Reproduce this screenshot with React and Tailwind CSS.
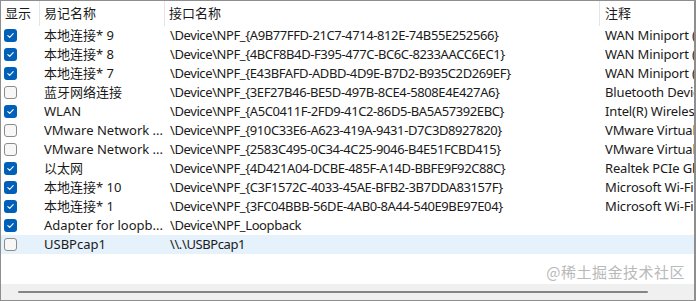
import React from "react";

const rows = [
  [true, "本地连接* 9", "\\Device\\NPF_{A9B77FFD-21C7-4714-812E-74B55E252566}", "WAN Miniport (Network Monitor)"],
  [true, "本地连接* 8", "\\Device\\NPF_{4BCF8B4D-F395-477C-BC6C-8233AACC6EC1}", "WAN Miniport (IPv6)"],
  [true, "本地连接* 7", "\\Device\\NPF_{E43BFAFD-ADBD-4D9E-B7D2-B935C2D269EF}", "WAN Miniport (IP)"],
  [false, "蓝牙网络连接", "\\Device\\NPF_{3EF27B46-BE5D-497B-8CE4-5808E4E427A6}", "Bluetooth Device (Personal Area Network)"],
  [true, "WLAN", "\\Device\\NPF_{A5C0411F-2FD9-41C2-86D5-BA5A57392EBC}", "Intel(R) Wireless-AC 9560"],
  [false, "VMware Network ...", "\\Device\\NPF_{910C33E6-A623-419A-9431-D7C3D8927820}", "VMware Virtual Ethernet Adapter"],
  [false, "VMware Network ...", "\\Device\\NPF_{2583C495-0C34-4C25-9046-B4E51FCBD415}", "VMware Virtual Ethernet Adapter"],
  [true, "以太网", "\\Device\\NPF_{4D421A04-DCBE-485F-A14D-BBFE9F92C88C}", "Realtek PCIe GbE Family Controller"],
  [true, "本地连接* 10", "\\Device\\NPF_{C3F1572C-4033-45AE-BFB2-3B7DDA83157F}", "Microsoft Wi-Fi Direct Virtual Adapter"],
  [true, "本地连接* 1", "\\Device\\NPF_{3FC04BBB-56DE-4AB0-8A44-540E9BE97E04}", "Microsoft Wi-Fi Direct Virtual Adapter"],
  [true, "Adapter for loopb...", "\\Device\\NPF_Loopback", ""],
  [false, "USBPcap1", "\\\\.\\USBPcap1", ""],
];

function Check({ on }) {
  if (on) {
    return (
      <div className="w-[13px] h-[13px] rounded-[3px] bg-[#005fb8] flex items-center justify-center">
        <svg width="9" height="9" viewBox="0 0 9 9">
          <path d="M1.8 4.6 L3.7 6.4 L7.2 2.6" fill="none" stroke="white" strokeWidth="1.1" strokeLinecap="round" strokeLinejoin="round" />
        </svg>
      </div>
    );
  }
  return <div className="w-[13px] h-[13px] rounded-[3px] border border-[#8b8b8b] bg-[#f7f7f7]" />;
}

export default function App() {
  return (
    <div
      className="relative w-[696px] h-[301px] overflow-hidden bg-white border border-[#8e8e8e] border-r-2 flex flex-col text-[13px] text-[#1a1a1a]"
      style={{ fontFamily: '"Noto Sans", "Noto Sans CJK SC", sans-serif' }}
    >
      <div className="h-[25px] grid grid-cols-[39px_125px_435px_1fr] items-stretch shrink-0">
        <div className="pl-[4px] flex items-center border-r border-[#e5e5e5]">显示</div>
        <div className="pl-[4px] flex items-center border-r border-[#e5e5e5]">易记名称</div>
        <div className="pl-[4px] flex items-center border-r border-[#e5e5e5]">接口名称</div>
        <div className="pl-[5px] flex items-center whitespace-nowrap">注释</div>
      </div>
      <div className="flex flex-col">
        {rows.map((r, i) => (
          <div
            key={i}
            className={
              "h-[19px] grid grid-cols-[39px_125px_435px_1fr] items-center whitespace-nowrap " +
              (i === rows.length - 1 ? "bg-[#e5f1fb]" : "")
            }
          >
            <div className="pl-[3px] flex items-center">
              <Check on={r[0]} />
            </div>
            <div className="pl-[4px] overflow-hidden">{r[1]}</div>
            <div className="pl-[5px] overflow-hidden tracking-[-0.4px]">{r[2]}</div>
            <div className="pl-[5px] overflow-hidden tracking-[-0.15px]">{r[3]}</div>
          </div>
        ))}
      </div>
      <div className="flex-1" />
      <div className="h-[16px] bg-[#f0f0f0] shrink-0 flex items-center">
        <div className="ml-[17px] w-[630px] h-[2px] bg-[#858585] rounded-full" />
      </div>
      <div
        className="absolute right-[9px] bottom-[17px] text-[15px] text-[#a8a8a8] opacity-80 tracking-[0.5px]"
        style={{ fontFamily: '"Noto Sans CJK SC", sans-serif' }}
      >
        @稀土掘金技术社区
      </div>
    </div>
  );
}
